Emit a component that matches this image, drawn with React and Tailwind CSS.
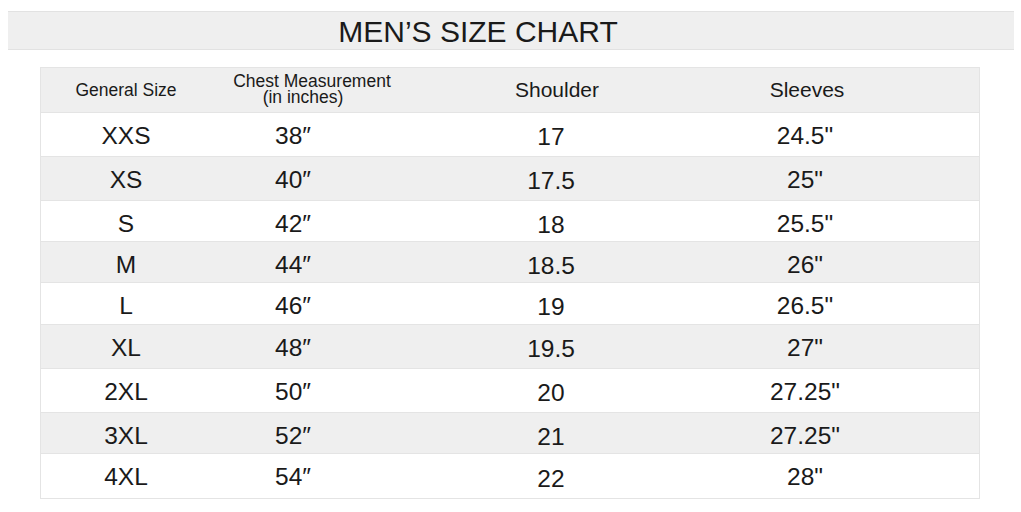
const rows = [
  ["XXS", "38″", "17", '24.5"'],
  ["XS", "40″", "17.5", '25"'],
  ["S", "42″", "18", '25.5"'],
  ["M", "44″", "18.5", '26"'],
  ["L", "46″", "19", '26.5"'],
  ["XL", "48″", "19.5", '27"'],
  ["2XL", "50″", "20", '27.25"'],
  ["3XL", "52″", "21", '27.25"'],
  ["4XL", "54″", "22", '28"'],
];

const heights = ["h-[44px]", "h-[44px]", "h-[41px]", "h-[41px]", "h-[42px]", "h-[44px]", "h-[44px]", "h-[41px]", "h-[44px]"];

export default function App() {
  return (
    <div className="w-[1021px] h-[512px] bg-white text-[#1a1a1a] font-['Liberation_Sans',Arial,sans-serif] pt-[11px]">
      {/* title bar */}
      <div className="mx-[8px] w-[1006px] h-[39px] bg-[#efefef] border-y border-[#e2e2e2] flex items-center">
        <h1 className="w-[940px] text-center text-[30px] leading-none pt-[3px]">MEN’S SIZE CHART</h1>
      </div>

      {/* table */}
      <div className="ml-[40px] mt-[17px] w-[940px] border border-[#e4e4e4]">
        <div className="grid grid-cols-[170px_202px_288px_212px_1fr] h-[45px] bg-[#efefef] border-b border-[#e4e4e4] items-center">
          <div className="text-center text-[17.5px] pt-[1px]">General Size</div>
          <div className="text-center text-[17.5px] leading-[16px] -mt-[3px]">
            Chest Measurement
            <br />
            <span className="pr-[18px]">(in inches)</span>
          </div>
          <div className="text-center text-[21px]">Shoulder</div>
          <div className="text-center text-[21px]">Sleeves</div>
          <div />
        </div>

        {rows.map((r, i) => (
          <div
            key={r[0]}
            className={`grid grid-cols-[170px_202px_288px_212px_1fr] items-center text-[24.5px] ${heights[i]} ${
              i % 2 === 1 ? "bg-[#efefef]" : "bg-white"
            } ${i < rows.length - 1 ? "border-b border-[#e4e4e4]" : ""}`}
          >
            <div className="text-center pt-[3px]">{r[0]}</div>
            <div className="text-center pr-[38px] pt-[3px]">{r[1]}</div>
            <div className="text-center pr-[12px] pt-[6px]">{r[2]}</div>
            <div className="text-center pr-[4px] pt-[3px]">{r[3]}</div>
            <div />
          </div>
        ))}
      </div>
    </div>
  );
}
